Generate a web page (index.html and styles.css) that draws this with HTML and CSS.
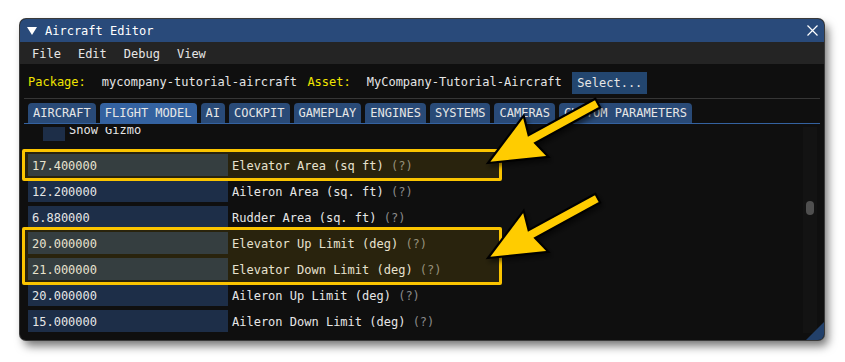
FILE: index.html
```html
<!DOCTYPE html>
<html>
<head>
<meta charset="utf-8">
<title>Aircraft Editor</title>
<link rel="stylesheet" href="styles.css">
</head>
<body>
<div class="window">
  <div class="titlebar">
    <svg class="collapse" width="10" height="8" viewBox="0 0 10 8"><polygon points="0,0 10,0 5,8" fill="#ffffff"/></svg>
    <span class="title">Aircraft Editor</span>
    <svg class="close" width="11" height="11" viewBox="0 0 11 11"><path d="M0.5 0.5L10.5 10.5M10.5 0.5L0.5 10.5" stroke="#ffffff" stroke-width="1.2" fill="none"/></svg>
  </div>
  <div class="menubar">
    <span class="menu-item">File</span>
    <span class="menu-item">Edit</span>
    <span class="menu-item">Debug</span>
    <span class="menu-item">View</span>
  </div>
  <div class="body">
    <div class="package-row">
      <span class="key">Package:</span>
      <span class="val">mycompany-tutorial-aircraft</span>
      <span class="key key-asset">Asset:</span>
      <span class="val">MyCompany-Tutorial-Aircraft</span>
      <span class="btn">Select...</span>
    </div>
    <div class="separator"></div>
    <div class="tabs">
      <span class="tab">AIRCRAFT</span>
      <span class="tab active">FLIGHT MODEL</span>
      <span class="tab">AI</span>
      <span class="tab">COCKPIT</span>
      <span class="tab">GAMEPLAY</span>
      <span class="tab">ENGINES</span>
      <span class="tab">SYSTEMS</span>
      <span class="tab">CAMERAS</span>
      <span class="tab">CUSTOM PARAMETERS</span>
    </div>
    <div class="viewport">
      <div class="list">
        <div class="check-row"><span class="checkbox"></span><span>Show Gizmo</span></div>
        <div class="group">
          <div class="row"><span class="input">17.400000</span><span class="label">Elevator Area (sq ft) <span class="help">(?)</span></span></div>
        </div>
        <div class="row"><span class="input">12.200000</span><span class="label">Aileron Area (sq. ft) <span class="help">(?)</span></span></div>
        <div class="row"><span class="input">6.880000</span><span class="label">Rudder Area (sq. ft) <span class="help">(?)</span></span></div>
        <div class="group">
          <div class="row"><span class="input">20.000000</span><span class="label">Elevator Up Limit (deg) <span class="help">(?)</span></span></div>
          <div class="row"><span class="input">21.000000</span><span class="label">Elevator Down Limit (deg) <span class="help">(?)</span></span></div>
        </div>
        <div class="row"><span class="input">20.000000</span><span class="label">Aileron Up Limit (deg) <span class="help">(?)</span></span></div>
        <div class="row"><span class="input">15.000000</span><span class="label">Aileron Down Limit (deg) <span class="help">(?)</span></span></div>
      </div>
      <div class="scrollbar"><div class="thumb"></div></div>
    </div>
  </div>
  <div class="grip"></div>
</div>
<svg class="arrows" width="845" height="362" viewBox="0 0 845 362">
  <defs>
    <filter id="sh" x="-30%" y="-30%" width="160%" height="160%">
      <feDropShadow dx="2" dy="3" stdDeviation="2.5" flood-color="#000000" flood-opacity="0.55"/>
    </filter>
    <polygon id="arr" points="0,0 54,-24.5 49,-5 125,-5 125,5 51,5 56,23.5"/>
  </defs>
  <g filter="url(#sh)" fill="#ffcc00" stroke="#000000" stroke-width="2.2" stroke-miterlimit="6">
    <use href="#arr" transform="translate(488,163) rotate(-28.6)"/>
    <use href="#arr" transform="translate(488,258) rotate(-28.6)"/>
  </g>
</svg>
</body>
</html>
```
FILE: styles.css
```css
* { box-sizing: border-box; }
html, body { margin: 0; padding: 0; }
body {
  width: 845px;
  height: 362px;
  background: #ffffff;
  font-family: "DejaVu Sans Mono", "Liberation Mono", monospace;
  font-size: 12px;
  line-height: 14px;
  color: #e6e6e6;
  padding: 19px 0 0 20px;
  position: relative;
  overflow: hidden;
}
.window {
  width: 804px;
  height: 321px;
  border-radius: 6px;
  overflow: hidden;
  background: #0f0f0f;
  display: flex;
  flex-direction: column;
  box-shadow: 0 0 0 1px #3a3a3a, 4px 6px 10px rgba(0, 0, 0, 0.55);
  position: relative;
}
.titlebar {
  height: 23px;
  flex: none;
  background: #294a7a;
  display: flex;
  align-items: center;
  padding: 1px 6px 0 7px;
}
.collapse { margin-right: 8px; flex: none; margin-top: -1px; }
.title { flex: 1; color: #ffffff; }
.close { flex: none; margin-top: -1px; }
.menubar {
  height: 22px;
  flex: none;
  background: #242424;
  display: flex;
  align-items: center;
  padding: 2px 0 0 4px;
}
.menu-item { padding: 0 8px; margin-right: 1px; }
.body {
  flex: 1;
  min-height: 0;
  display: flex;
  flex-direction: column;
  padding-bottom: 7px;
}
.package-row {
  flex: none;
  display: flex;
  align-items: flex-start;
  height: 22px;
  margin-top: 8px;
  padding-left: 8px;
}
.key { color: #f0e400; margin-top: 3px; margin-right: 16px; white-space: pre; }
.val { margin-top: 3px; margin-right: 10.5px; white-space: pre; }
.btn {
  height: 22px;
  background: #23466f;
  padding: 4px 5px 0;
  white-space: pre;
}
.separator {
  flex: none;
  height: 1px;
  margin: 4px 4px 0;
  background: #363636;
}
.tabs {
  flex: none;
  display: flex;
  gap: 4px;
  margin: 4px 4px 0;
  padding-left: 4px;
  border-bottom: 1px solid #3462a0;
}
.tab {
  height: 20px;
  padding: 3px 5px 0;
  background: #294a77;
  border-radius: 4px 4px 0 0;
  white-space: pre;
}
.tab.active { background: #3462a0; }
.viewport {
  flex: 1;
  min-height: 0;
  margin-top: 3px;
  display: flex;
  overflow: hidden;
}
.list {
  flex: 1;
  align-self: flex-start;
  margin-top: -8px;
  padding-left: 8px;
  display: flex;
  flex-direction: column;
  gap: 4px;
}
.check-row {
  display: flex;
  align-items: center;
  height: 22px;
  padding-left: 15px;
  margin-bottom: 9px;
}
.checkbox {
  width: 22px;
  height: 22px;
  background: #1d2e48;
  margin-right: 4px;
}
.group {
  position: relative;
  display: flex;
  flex-direction: column;
  gap: 4px;
}
.group::after {
  content: "";
  position: absolute;
  left: -6px;
  top: -5px;
  bottom: -5px;
  width: 474px;
  border: 3px solid #fbc400;
  border-radius: 2px;
  background: rgba(255, 200, 0, 0.11);
}
.row {
  display: flex;
  align-items: flex-start;
  height: 22px;
}
.input {
  width: 200px;
  height: 22px;
  background: #1d2e48;
  padding: 5px 4px 0;
}
.label { margin-left: 4px; margin-top: 5px; white-space: pre; }
.help { color: #8a8a8a; }
.scrollbar {
  flex: none;
  width: 14px;
  background: #131313;
  margin-right: 7px;
}
.thumb {
  margin: 74px 3px 0;
  height: 14px;
  border-radius: 4px;
  background: #4f4f4f;
}
.grip {
  position: absolute;
  right: 0;
  bottom: 0;
  width: 18px;
  height: 18px;
  background: #22406a;
  clip-path: polygon(100% 0, 100% 100%, 0 100%);
}
.arrows {
  position: absolute;
  left: 0;
  top: 0;
  pointer-events: none;
}
```
